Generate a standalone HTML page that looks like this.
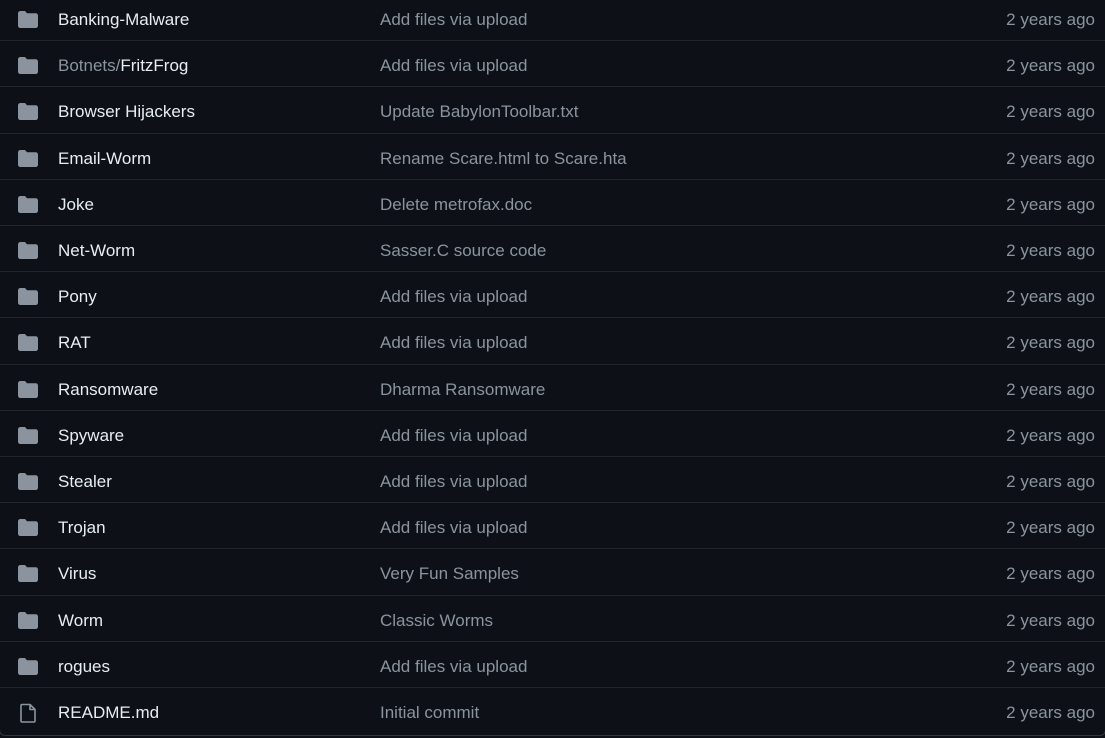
<!DOCTYPE html>
<html><head><meta charset="utf-8"><style>
html,body{margin:0;padding:0;background:#0d1117;width:1105px;height:738px;overflow:hidden;font-family:"Liberation Sans",sans-serif;}
.box{position:absolute;left:-1px;top:-10px;width:1105px;height:744px;border:1px solid #30363d;border-radius:6px;}
.row{position:absolute;left:0;width:1105px;height:46px;border-top:1px solid #21262d;}
.row svg{position:absolute;left:17px;top:15px;}
.n{position:absolute;left:58px;top:15px;font-size:17px;color:#e6edf3;white-space:nowrap;}
.n span{color:#8b949e;}
.m{position:absolute;left:380px;top:15px;font-size:17px;color:#8b949e;white-space:nowrap;}
.d{position:absolute;right:10px;top:15px;font-size:17px;color:#8b949e;white-space:nowrap;}
</style></head><body>
<div class="box"></div>
<div id="rows"></div>
<script>
var data=[["Banking-Malware","Add files via upload"],["<span>Botnets/</span>FritzFrog","Add files via upload"],["Browser Hijackers","Update BabylonToolbar.txt"],["Email-Worm","Rename Scare.html to Scare.hta"],["Joke","Delete metrofax.doc"],["Net-Worm","Sasser.C source code"],["Pony","Add files via upload"],["RAT","Add files via upload"],["Ransomware","Dharma Ransomware"],["Spyware","Add files via upload"],["Stealer","Add files via upload"],["Trojan","Add files via upload"],["Virus","Very Fun Samples"],["Worm","Classic Worms"],["rogues","Add files via upload"],["README.md","Initial commit"]];
var folder='<svg width="22" height="20" viewBox="0 0 22 20"><path d="M1 3.5C1 2.1 2 1 3.4 1H8l2 2.2h8.6c1.4 0 2.4 1 2.4 2.4v10c0 1.3-1 2.4-2.4 2.4H3.4C2 18 1 17 1 15.6z" fill="#8b949e"/></svg>';
var file='<svg width="22" height="22" viewBox="0 0 22 22" style="top:14px"><path d="M5 2.5h8l5 5v11.5a1 1 0 0 1-1 1H5a1 1 0 0 1-1-1V3.5a1 1 0 0 1 1-1z M13 2.5v5h5" fill="none" stroke="#8b949e" stroke-width="1.6" stroke-linejoin="round"/></svg>';
var h='';
for(var i=0;i<data.length;i++){
 var t=-5+46.2*i;
 h+='<div class="row" style="top:'+(t-1)+'px">'+(i==15?file:folder)+'<div class="n">'+data[i][0]+'</div><div class="m">'+data[i][1]+'</div><div class="d">2 years ago</div></div>';
}
document.getElementById('rows').innerHTML=h;
</script>
</body></html>
